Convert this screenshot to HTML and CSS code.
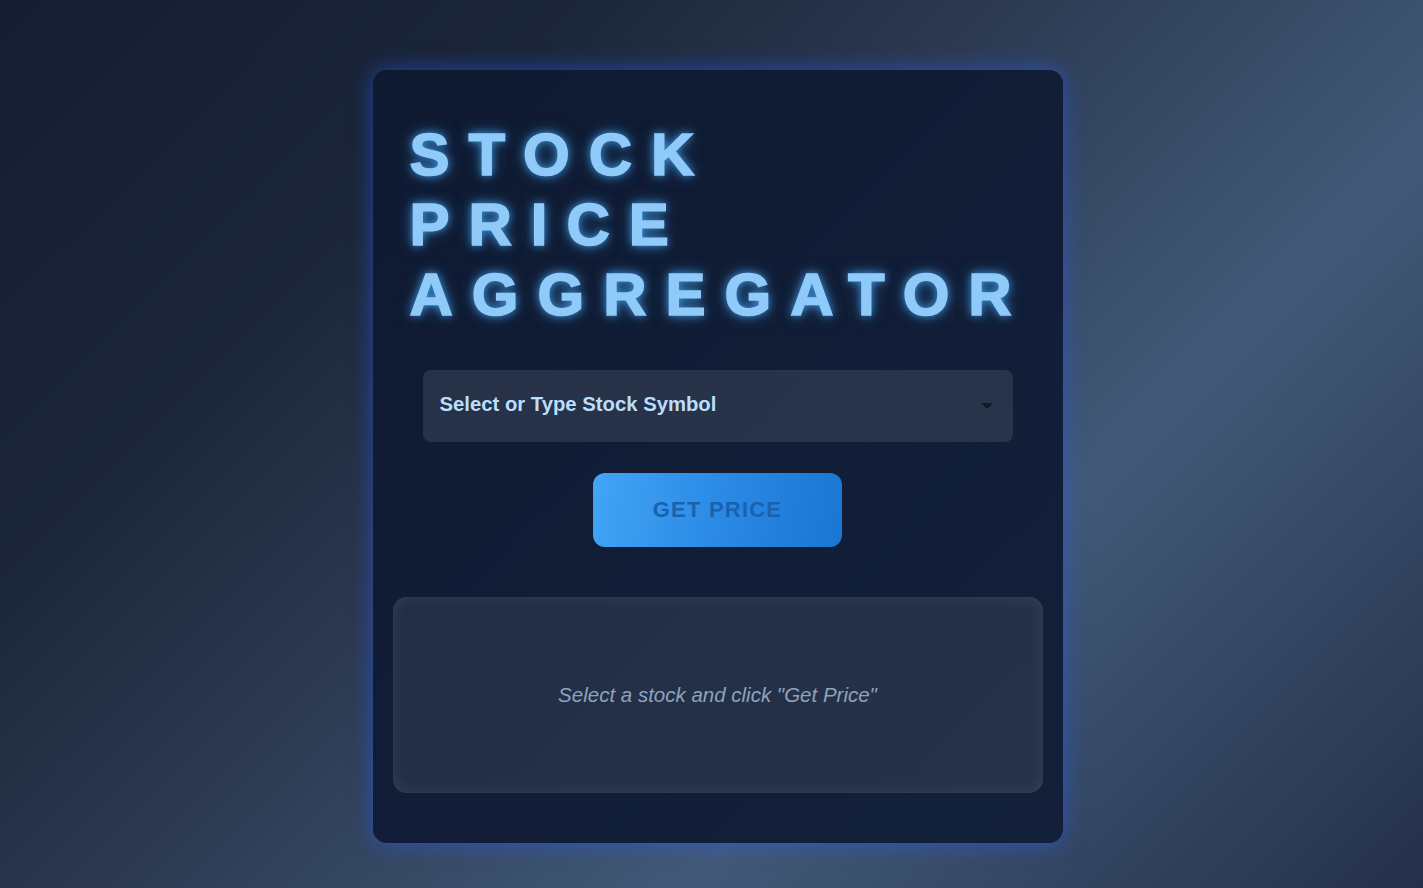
FILE: index.html
```html
<!DOCTYPE html>
<html lang="en">
<head>
<meta charset="utf-8">
<title>Stock Price Aggregator</title>
<link rel="stylesheet" href="styles.css">
</head>
<body>
<div class="page">
  <main class="card">
    <h1 class="title"><span>STOCK</span><span>PRICE</span><span>AGGREGATOR</span></h1>
    <div class="select">
      <span class="select-text">Select or Type Stock Symbol</span>
      <span class="caret"></span>
    </div>
    <div class="actions">
      <button class="btn">GET PRICE</button>
    </div>
    <section class="result">
      <p class="hint">Select a stock and click "Get Price"</p>
    </section>
  </main>
</div>
</body>
</html>
```
FILE: styles.css
```css
html, body {
  margin: 0;
  padding: 0;
  height: 100%;
}
body {
  font-family: "Liberation Sans", Arial, sans-serif;
  background: linear-gradient(135deg, #141e30 0%, #1b2638 25%, #2b384f 42%, #415a78 68%, #25304a 100%);
  overflow: hidden;
}
.page {
  display: flex;
  justify-content: center;
  padding: 70px 0 0 12px;
  box-sizing: border-box;
  height: 100%;
}
.card {
  width: 690px;
  height: 773px;
  box-sizing: border-box;
  border-radius: 14px;
  background: linear-gradient(135deg, #0f1a31 0%, #111d36 50%, #13203a 100%);
  box-shadow: 0 0 22px rgba(40, 90, 240, 0.6);
  padding: 50px 20px 0 20px;
  display: flex;
  flex-direction: column;
}
.title {
  margin: 0 0 40px 0;
  padding-left: 17px;
  font-family: "Liberation Sans", Arial, sans-serif;
  font-weight: 900;
  font-size: 60px;
  line-height: 70px;
  letter-spacing: 19px;
  color: #90caf9;
  -webkit-text-stroke: 1.6px #90caf9;
  text-shadow: 0 0 8px rgba(66, 165, 245, 0.95), 0 0 16px rgba(66, 165, 245, 0.5);
}
.title span {
  display: block;
}
.select {
  margin: 0 30px;
  height: 72px;
  border-radius: 8px;
  background: linear-gradient(135deg, #273248 0%, #283449 100%);
  display: flex;
  align-items: center;
  justify-content: space-between;
  padding: 0 17px;
  box-sizing: border-box;
}
.select-text {
  color: #bbdefb;
  font-weight: bold;
  font-size: 20.3px;
  position: relative;
  top: -2px;
}
.caret {
  width: 0;
  height: 0;
  border-left: 6px solid transparent;
  border-right: 6px solid transparent;
  border-top: 6px solid #15181f;
  margin-right: 3px;
}
.actions {
  display: flex;
  justify-content: center;
  margin-top: 31px;
}
.btn {
  width: 249px;
  height: 74px;
  border: none;
  border-radius: 12px;
  background: linear-gradient(100deg, #42a5f5 0%, #2b8ae6 50%, #1976d2 100%);
  color: #1a62ae;
  font-family: "Liberation Sans", Arial, sans-serif;
  font-weight: bold;
  font-size: 22px;
  letter-spacing: 1.2px;
  padding: 0;
}
.result {
  margin-top: 50px;
  height: 196px;
  border-radius: 14px;
  background: linear-gradient(135deg, #222e46 0%, #25324a 100%);
  box-shadow: inset 0 0 16px rgba(255, 255, 255, 0.08), inset 0 0 2px rgba(255, 255, 255, 0.06);
  display: flex;
  align-items: center;
  justify-content: center;
}
.hint {
  margin: 0;
  color: #8ea3bc;
  font-style: italic;
  font-size: 20.5px;
}
```
